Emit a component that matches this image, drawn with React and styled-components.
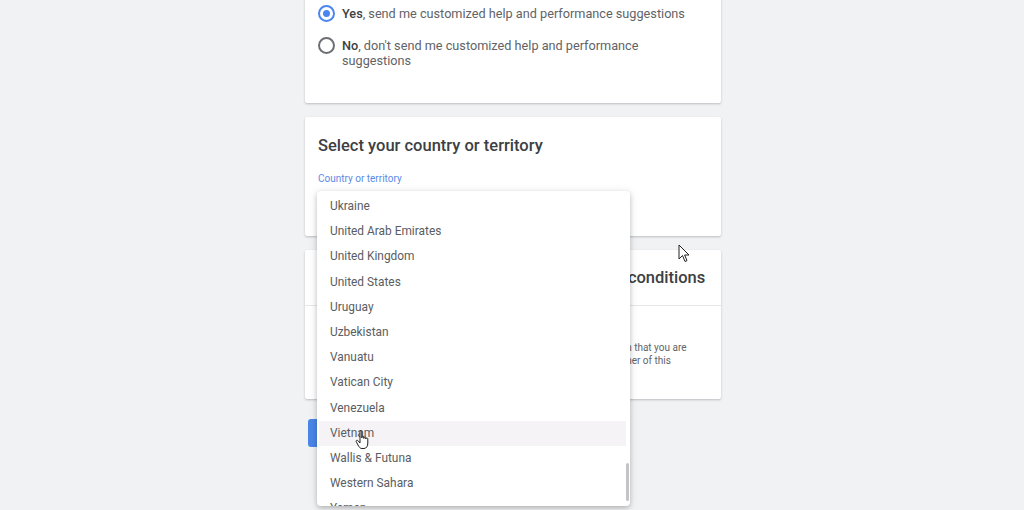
import React from 'react';
import styled, { createGlobalStyle } from 'styled-components';

const GlobalStyle = createGlobalStyle`
  html, body {
    margin: 0;
    padding: 0;
    background: #f1f2f4;
    font-family: Roboto, "Liberation Sans", Arial, sans-serif;
    color: #3c4043;
    overflow: hidden;
  }
`;

const Page = styled.div`
  position: relative;
  width: 1024px;
  height: 510px;
  overflow: hidden;
`;

const Column = styled.div`
  width: 416px;
  margin: -24px 0 0 305px;
  display: flex;
  flex-direction: column;
  gap: 14px;
`;

const Card = styled.div`
  background: #fff;
  border-radius: 2px;
  box-shadow: 0 1px 2px rgba(60, 64, 67, 0.22), 0 1px 3px rgba(60, 64, 67, 0.08);
`;

const OptionsCard = styled(Card)`
  padding: 30px 16px 35px 13px;
  display: flex;
  flex-direction: column;
  gap: 16px;
`;

const Option = styled.label`
  display: flex;
  align-items: flex-start;
  gap: 7px;
  font-size: 12.7px;
  line-height: 15px;
  color: #5f6368;
  b {
    font-weight: 500;
    color: #3c4043;
  }
`;

const Radio = styled.span`
  flex: none;
  box-sizing: border-box;
  width: 17px;
  height: 17px;
  margin-top: -1px;
  border-radius: 50%;
  border: 2px solid ${(p) => (p.checked ? '#4a86f0' : '#6d6f73')};
  display: flex;
  align-items: center;
  justify-content: center;
  &::after {
    content: '';
    width: 7px;
    height: 7px;
    border-radius: 50%;
    background: ${(p) => (p.checked ? '#4a86f0' : 'transparent')};
  }
`;

const CountryCard = styled(Card)`
  padding: 18px 16px 14px 13px;
`;

const Title = styled.h2`
  margin: 0;
  font-size: 16.5px;
  line-height: 22px;
  font-weight: 500;
  color: #3c4043;
  white-space: nowrap;
`;

const Field = styled.div`
  position: relative;
  margin-top: 15px;
`;

const FieldLabel = styled.div`
  font-size: 10px;
  line-height: 14px;
  color: #5c8ae6;
`;

const FieldBox = styled.div`
  height: 36px;
`;

const TermsCard = styled(Card)`
  display: flex;
  flex-direction: column;
`;

const TermsHead = styled.div`
  padding: 17px 16px 16px 13px;
  border-bottom: 1px solid #e6e7e9;
`;

const TermsBody = styled.p`
  margin: 0;
  padding: 35px 16px 19px 13px;
  font-size: 10px;
  line-height: 13px;
  color: #5f6368;
`;

const Actions = styled.div`
  padding: 6px 0 0 3px;
`;

const Button = styled.button`
  height: 28px;
  width: 80px;
  border: 0;
  border-radius: 3px;
  background: #4a86e8;
  color: #fff;
  font-family: inherit;
  font-size: 13px;
  font-weight: 500;
`;

const Menu = styled.div`
  position: absolute;
  top: 19px;
  left: -1px;
  width: 313px;
  height: 315px;
  background: #fff;
  border-radius: 4px;
  box-shadow: 0 2px 5px rgba(0, 0, 0, 0.22), 0 1px 12px rgba(0, 0, 0, 0.08);
  overflow: hidden;
  z-index: 5;
`;

const MenuList = styled.ul`
  list-style: none;
  margin: 0;
  padding: 3px 4px 0 2px;
`;

const MenuItem = styled.li`
  height: 25.2px;
  line-height: 25.2px;
  padding-left: 11px;
  font-size: 11.9px;
  color: #5a5d61;
  background: ${(p) => (p.hover ? '#f5f3f5' : 'transparent')};
`;

const Thumb = styled.div`
  position: absolute;
  right: 1px;
  top: 272px;
  width: 3px;
  height: 38px;
  border-radius: 2px;
  background: #c4c4c6;
`;

const Cursor = styled.svg`
  position: absolute;
  left: ${(p) => p.x}px;
  top: ${(p) => p.y}px;
  z-index: 10;
  pointer-events: none;
`;

const countries = [
  'Ukraine',
  'United Arab Emirates',
  'United Kingdom',
  'United States',
  'Uruguay',
  'Uzbekistan',
  'Vanuatu',
  'Vatican City',
  'Venezuela',
  'Vietnam',
  'Wallis & Futuna',
  'Western Sahara',
  'Yemen',
  'Zambia',
  'Zimbabwe',
];

const App = () => (
  <>
    <GlobalStyle />
    <Page>
      <Column>
        <OptionsCard>
          <Option>
            <Radio checked />
            <span>
              <b>Yes</b>, send me customized help and performance suggestions
            </span>
          </Option>
          <Option>
            <Radio />
            <span>
              <b>No</b>, don't send me customized help and performance suggestions
            </span>
          </Option>
        </OptionsCard>

        <CountryCard>
          <Title>Select your country or territory</Title>
          <Field>
            <FieldLabel>Country or territory</FieldLabel>
            <FieldBox />
            <Menu>
              <MenuList>
                {countries.map((c) => (
                  <MenuItem key={c} hover={c === 'Vietnam' ? 1 : 0}>
                    {c}
                  </MenuItem>
                ))}
              </MenuList>
              <Thumb />
            </Menu>
          </Field>
        </CountryCard>

        <TermsCard>
          <TermsHead>
            <Title>Review and accept Google Ads terms and conditions</Title>
          </TermsHead>
          <TermsBody>
            By continuing, you consent to the Google Ads terms below and confirm that you are
            authorized to accept these terms in full on behalf of the registered owner of this
            account.
          </TermsBody>
        </TermsCard>

        <Actions>
          <Button>Submit</Button>
        </Actions>
      </Column>

      <Cursor x={678} y={244} width="12" height="19" viewBox="0 0 12 19">
        <path d="M1 1 L1 15 L4.5 11.5 L7 17.5 L9 16.6 L6.6 11 L11 11 Z" fill="#fff" stroke="#222" strokeWidth="1" strokeLinejoin="round" />
      </Cursor>
      <Cursor x={355} y={430} width="16" height="20" viewBox="0 0 16 20">
        <path
          d="M5 1.5 C5 0.7 6.8 0.7 6.8 1.5 L6.8 8 L7 6.8 C7 6 8.8 6 8.8 6.8 L8.8 8.5 L9 7.6 C9 6.9 10.8 6.9 10.8 7.6 L10.8 9 L11 8.6 C11 7.9 12.8 7.9 12.8 8.6 L12.8 13 C12.8 16 11.5 18.5 9 18.5 L7 18.5 C5 18.5 4 17 3 15 L1.2 11.5 C0.8 10.6 2 9.8 2.8 10.6 L5 13 Z"
          fill="#fff"
          stroke="#222"
          strokeWidth="1"
          strokeLinejoin="round"
        />
      </Cursor>
    </Page>
  </>
);

export default App;
